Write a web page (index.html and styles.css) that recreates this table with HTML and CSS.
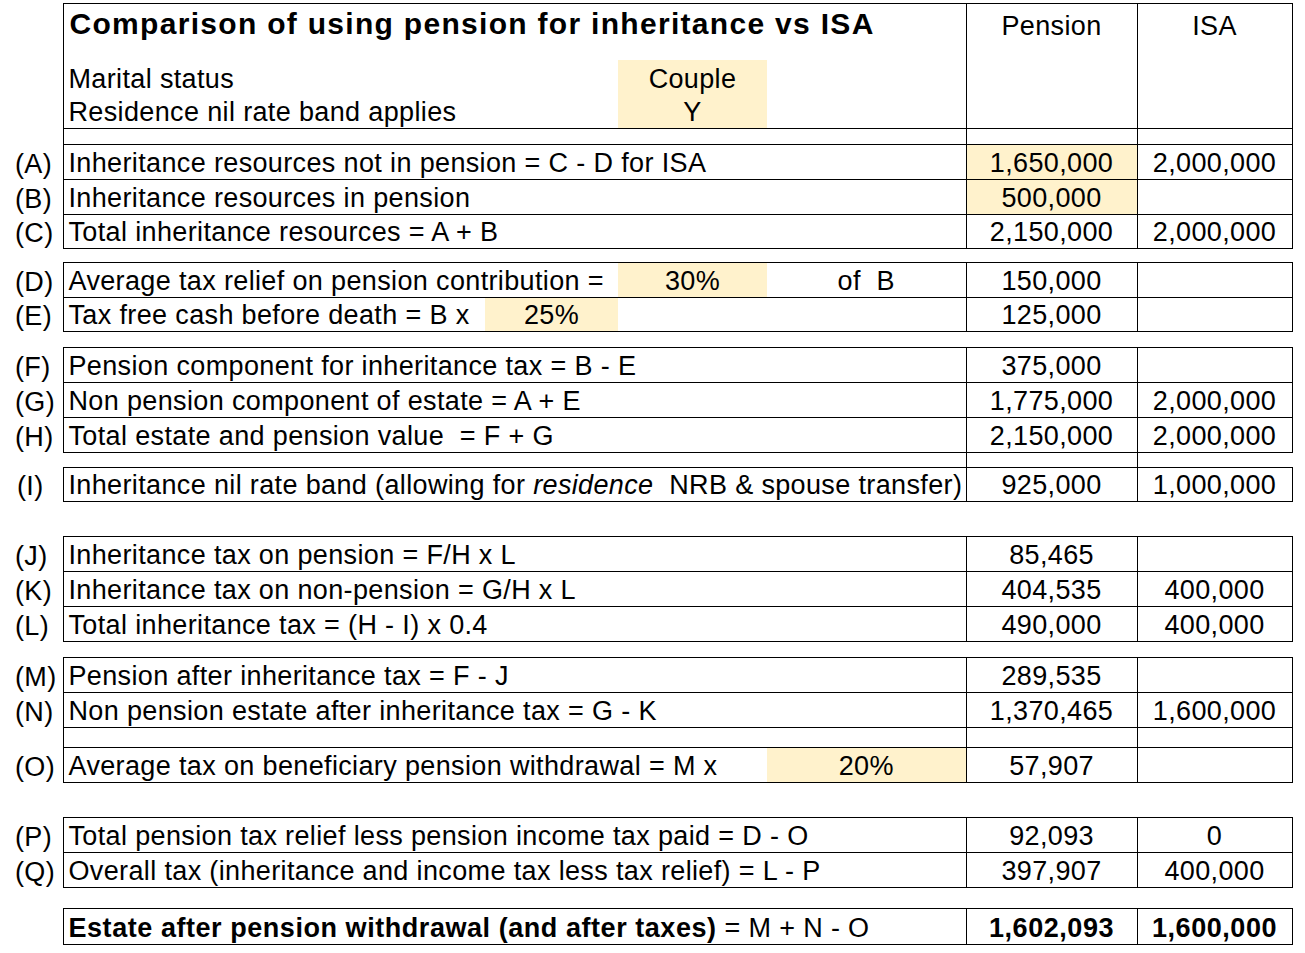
FILE: index.html
```html
<!DOCTYPE html>
<html lang="en">
<head>
<meta charset="utf-8">
<title>Comparison of using pension for inheritance vs ISA</title>
<link rel="stylesheet" href="styles.css">
</head>
<body>
<table class="sheet">
  <colgroup>
    <col class="c0"><col class="c1"><col class="c2"><col class="c3"><col class="c4"><col class="c5"><col class="c6">
  </colgroup>
  <tr class="r-title">
    <td class="lab"></td>
    <td colspan="4" class="title bt bl">Comparison of using pension for inheritance vs ISA</td>
    <td rowspan="3" class="hdr bt bb bl br">Pension</td>
    <td rowspan="3" class="hdr bt bb bl br">ISA</td>
  </tr>
  <tr class="r35">
    <td class="lab"></td>
    <td colspan="2" class="bl">Marital status</td>
    <td class="tint ctr">Couple</td>
    <td></td>
  </tr>
  <tr class="r34">
    <td class="lab"></td>
    <td colspan="2" class="bl bb">Residence nil rate band applies</td>
    <td class="tint ctr bb">Y</td>
    <td class="bb"></td>
  </tr>
  <tr class="box r16">
    <td class="lab"></td>
    <td colspan="4" class="bl"></td>
    <td class="v"></td>
    <td class="v"></td>
  </tr>

  <tr class="box r35">
    <td class="lab">(A)</td>
    <td colspan="4" class="bl">Inheritance resources not in pension = C - D for ISA</td>
    <td class="v tint">1,650,000</td>
    <td class="v">2,000,000</td>
  </tr>
  <tr class="box r35">
    <td class="lab">(B)</td>
    <td colspan="4" class="bl">Inheritance resources in pension</td>
    <td class="v tint">500,000</td>
    <td class="v"></td>
  </tr>
  <tr class="box r34">
    <td class="lab">(C)</td>
    <td colspan="4" class="bl">Total inheritance resources = A + B</td>
    <td class="v">2,150,000</td>
    <td class="v">2,000,000</td>
  </tr>
  <tr class="gap r14"><td colspan="7"></td></tr>

  <tr class="box r35">
    <td class="lab">(D)</td>
    <td colspan="2" class="bl">Average tax relief on pension contribution =</td>
    <td class="tint ctr">30%</td>
    <td class="ctr">of&nbsp; B</td>
    <td class="v">150,000</td>
    <td class="v"></td>
  </tr>
  <tr class="box r34">
    <td class="lab">(E)</td>
    <td class="bl">Tax free cash before death = B x</td>
    <td class="tint ctr">25%</td>
    <td colspan="2"></td>
    <td class="v">125,000</td>
    <td class="v"></td>
  </tr>
  <tr class="gap r16"><td colspan="7"></td></tr>

  <tr class="box r35">
    <td class="lab">(F)</td>
    <td colspan="4" class="bl">Pension component for inheritance tax = B - E</td>
    <td class="v">375,000</td>
    <td class="v"></td>
  </tr>
  <tr class="box r35">
    <td class="lab">(G)</td>
    <td colspan="4" class="bl">Non pension component of estate = A + E</td>
    <td class="v">1,775,000</td>
    <td class="v">2,000,000</td>
  </tr>
  <tr class="box r35">
    <td class="lab">(H)</td>
    <td colspan="4" class="bl">Total estate and pension value &nbsp;= F + G</td>
    <td class="v">2,150,000</td>
    <td class="v">2,000,000</td>
  </tr>
  <tr class="r15">
    <td class="lab"></td>
    <td colspan="4"></td>
    <td class="bl br"></td>
    <td></td>
  </tr>
  <tr class="box r34">
    <td class="lab lab-i">(I)</td>
    <td colspan="4" class="bl">Inheritance nil rate band (allowing for <i>residence</i>&nbsp; NRB &amp; spouse transfer)</td>
    <td class="v">925,000</td>
    <td class="v">1,000,000</td>
  </tr>
  <tr class="gap r35"><td colspan="7"></td></tr>

  <tr class="box r35">
    <td class="lab">(J)</td>
    <td colspan="4" class="bl">Inheritance tax on pension = F/H x L</td>
    <td class="v">85,465</td>
    <td class="v"></td>
  </tr>
  <tr class="box r35">
    <td class="lab">(K)</td>
    <td colspan="4" class="bl">Inheritance tax on non-pension = G/H x L</td>
    <td class="v">404,535</td>
    <td class="v">400,000</td>
  </tr>
  <tr class="box r35">
    <td class="lab">(L)</td>
    <td colspan="4" class="bl">Total inheritance tax = (H - I) x 0.4</td>
    <td class="v">490,000</td>
    <td class="v">400,000</td>
  </tr>
  <tr class="gap r16"><td colspan="7"></td></tr>

  <tr class="box r35">
    <td class="lab">(M)</td>
    <td colspan="4" class="bl">Pension after inheritance tax = F - J</td>
    <td class="v">289,535</td>
    <td class="v"></td>
  </tr>
  <tr class="box r35">
    <td class="lab">(N)</td>
    <td colspan="4" class="bl">Non pension estate after inheritance tax = G - K</td>
    <td class="v">1,370,465</td>
    <td class="v">1,600,000</td>
  </tr>
  <tr class="box r20">
    <td class="lab"></td>
    <td colspan="4" class="bl"></td>
    <td class="v"></td>
    <td class="v"></td>
  </tr>
  <tr class="box r35">
    <td class="lab">(O)</td>
    <td colspan="3" class="bl">Average tax on beneficiary pension withdrawal = M x</td>
    <td class="tint ctr">20%</td>
    <td class="v">57,907</td>
    <td class="v"></td>
  </tr>
  <tr class="gap r35"><td colspan="7"></td></tr>

  <tr class="box r35">
    <td class="lab">(P)</td>
    <td colspan="4" class="bl">Total pension tax relief less pension income tax paid = D - O</td>
    <td class="v">92,093</td>
    <td class="v">0</td>
  </tr>
  <tr class="box r35">
    <td class="lab">(Q)</td>
    <td colspan="4" class="bl">Overall tax (inheritance and income tax less tax relief) = L - P</td>
    <td class="v">397,907</td>
    <td class="v">400,000</td>
  </tr>
  <tr class="gap r21"><td colspan="7"></td></tr>

  <tr class="box r36">
    <td class="lab"></td>
    <td colspan="4" class="bl"><b>Estate after pension withdrawal (and after taxes)</b> = M + N - O</td>
    <td class="v strong">1,602,093</td>
    <td class="v strong">1,600,000</td>
  </tr>
</table>
</body>
</html>
```

FILE: styles.css
```css
html, body {
  margin: 0;
  padding: 0;
  background: #ffffff;
}

body {
  padding-top: 3px;
  font-family: "Liberation Sans", Arial, sans-serif;
  color: #000000;
}

.sheet {
  border-collapse: collapse;
  table-layout: fixed;
  width: 1292px;
  font-size: 27px;
  letter-spacing: 0.36px;
  line-height: 30px;
}

.c0 { width: 63px; }
.c1 { width: 422px; }
.c2 { width: 133px; }
.c3 { width: 149px; }
.c4 { width: 199px; }
.c5 { width: 171px; }
.c6 { width: 155px; }

.sheet td {
  padding: 0 0 1px 5px;
  vertical-align: bottom;
  white-space: nowrap;
  overflow: visible;
}

.box td:not(.lab) {
  border-top: 1px solid #000;
  border-bottom: 1px solid #000;
}

.bt { border-top: 1px solid #000; }
.bb { border-bottom: 1px solid #000; }
.bl { border-left: 1px solid #000; }
.br { border-right: 1px solid #000; }

.sheet td.v {
  border-left: 1px solid #000;
  border-right: 1px solid #000;
  text-align: center;
  padding-left: 0;
}

.sheet td.ctr {
  text-align: center;
  padding-left: 0;
}

.tint { background: #fff2cc; }

.sheet td.lab {
  padding-left: 15px;
}

.sheet td.lab-i { padding-left: 17px; }

.sheet td.title {
  vertical-align: top;
  padding-top: 3px;
  padding-left: 6px;
  font-weight: bold;
  font-size: 30px;
  letter-spacing: 1.3px;
  line-height: 34px;
}

.sheet td.hdr {
  vertical-align: top;
  text-align: center;
  padding-top: 7px;
  padding-left: 0;
}

b, .strong {
  font-weight: bold;
  letter-spacing: 0.55px;
}

.r-title { height: 56px; }
.r14 { height: 14px; }
.r15 { height: 15px; }
.r16 { height: 16px; }
.r20 { height: 20px; }
.r21 { height: 21px; }
.r34 { height: 34px; }
.r35 { height: 35px; }
.r36 { height: 36px; }

.gap td { padding: 0; line-height: 0; }
.r14 td, .r15 td, .r16 td, .r20 td, .r21 td { padding: 0; line-height: 0; }
```
